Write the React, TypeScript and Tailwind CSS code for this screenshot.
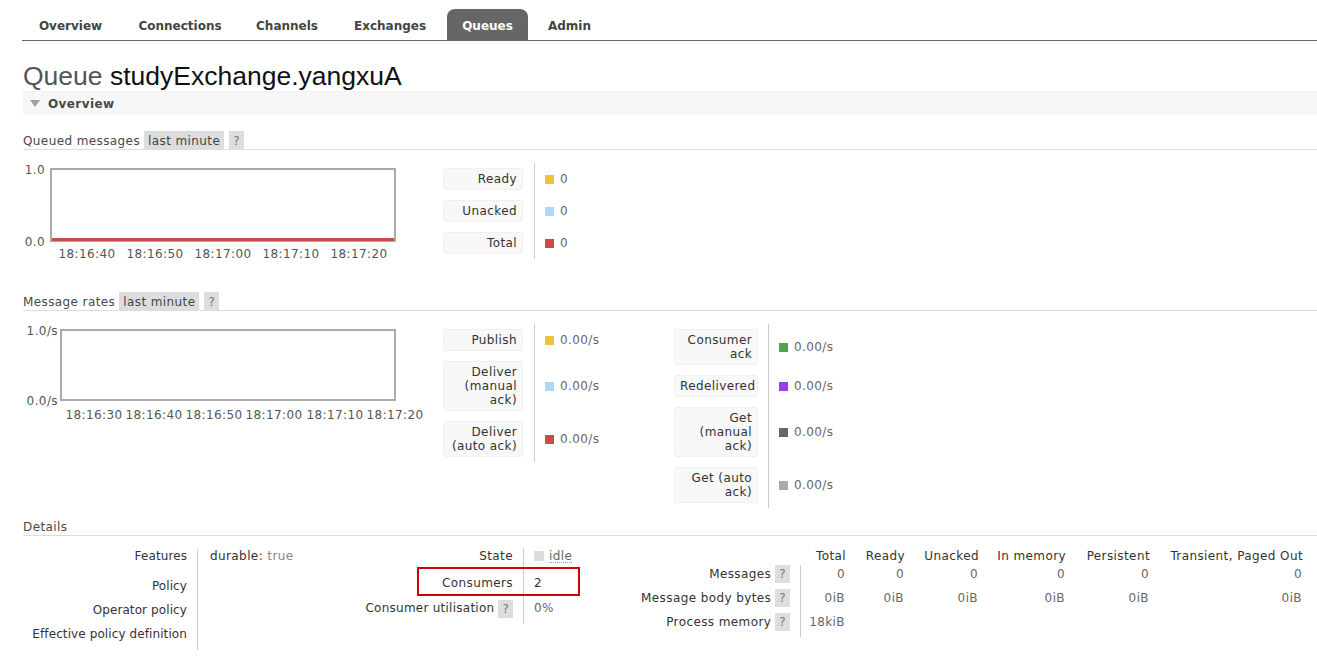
import React from "react";

type LegendItem = { label: string[]; color: string; value: string };

function SectionHeader({ title, badges }: { title: string; badges?: boolean }) {
  return (
    <div className="flex h-[19px] items-stretch border-b border-[#ddd]">
      <span className="flex items-center pr-[4px] pt-[1px] text-[#484848]">{title}</span>
      {badges && (
        <>
          <span className="flex items-center bg-[#ddd] px-[4px] pt-[1px] text-[#444]">last minute</span>
          <span className="ml-[5px] flex items-center bg-[#ddd] px-[4px] pt-[1px] text-[#777]">?</span>
        </>
      )}
    </div>
  );
}

function Legend({
  items,
  labelW,
  valueW,
  gap,
}: {
  items: LegendItem[];
  labelW: string;
  valueW: string;
  gap: string;
}) {
  return (
    <div className="flex flex-col">
      {items.map((it, i) => (
        <div key={i} className="flex items-stretch">
          <div className={`${labelW} py-[5px]`}>
            <div className="rounded-[3px] border border-[#f0f0f0] bg-[#f8f8f8] px-[5px] py-[3px] text-right leading-[14px] text-[#333]">
              {it.label.map((l, j) => (
                <div key={j}>{l}</div>
              ))}
            </div>
          </div>
          <div className={`${gap} ${valueW} flex items-center border-l border-[#ccc] pl-[10px]`}>
            <span className="inline-block h-[9px] w-[9px]" style={{ background: it.color }} />
            <span className="ml-[6px] text-[#666]">{it.value}</span>
          </div>
        </div>
      ))}
    </div>
  );
}

function Chart({
  yTop,
  yBottom,
  boxLeft,
  boxW,
  boxH,
  labelRight,
  xLabels,
  redLine,
}: {
  yTop: string;
  yBottom: string;
  boxLeft: number;
  boxW: number;
  boxH: number;
  labelRight: number;
  xLabels: { t: string; c: number }[];
  redLine?: boolean;
}) {
  return (
    <div className="relative h-[112px] w-[420px] text-[#555]">
      <div className="absolute top-[13px] leading-[14px]" style={{ right: 420 - labelRight }}>
        {yTop}
      </div>
      <div className="absolute leading-[14px]" style={{ right: 420 - labelRight, top: 18 + boxH - 7 }}>
        {yBottom}
      </div>
      <div
        className="absolute top-[18px] border-2 border-[#aaa] bg-white"
        style={{ left: boxLeft, width: boxW, height: boxH }}
      >
        {redLine && <div className="absolute bottom-[-1px] left-0 right-0 h-[3px] bg-[#cb4b4b]" />}
      </div>
      {xLabels.map((x, i) => (
        <div
          key={i}
          className="absolute top-[97px] w-[64px] text-center leading-[14px]"
          style={{ left: x.c - 32 }}
        >
          {x.t}
        </div>
      ))}
    </div>
  );
}

const tabs: [string, string][] = [
  ["Overview", "w-[97px]"],
  ["Connections", "w-[112px]"],
  ["Channels", "w-[92px]"],
  ["Exchanges", "w-[104px]"],
  ["Queues", "w-[81px]"],
  ["Admin", "w-[73px]"],
];

export default function App() {
  return (
    <div className="min-h-screen bg-white pl-[23px] font-['DejaVu_Sans',Verdana,sans-serif] text-[12px] tracking-[0.4px] text-[#484848]">
      {/* Nav */}
      <div className="-ml-px flex gap-[5px] border-b border-[#666] pt-[9px] tracking-normal">
        {tabs.map(([t, w]) => (
          <div
            key={t}
            className={
              t === "Queues"
                ? `${w} flex h-[31px] items-center justify-center rounded-t-[8px] bg-[#666] pt-[2px] font-bold text-white`
                : `${w} flex h-[31px] items-center justify-center pt-[2px] font-bold text-[#444]`
            }
          >
            {t}
          </div>
        ))}
      </div>

      {/* Title */}
      <h1 className="mt-[21px] h-[29px] font-['Liberation_Sans',Arial,sans-serif] text-[26.5px] leading-[29px] tracking-normal">
        <span className="text-[#555]">Queue </span>
        <span className="text-[#111]">studyExchange.yangxuA</span>
      </h1>

      {/* Overview bar */}
      <div className="flex h-[24px] items-center border-t border-[#f2f2f2] bg-[#f7f7f7]">
        <svg width="10" height="7" viewBox="0 0 10 7" className="ml-[7px]">
          <polygon points="0,0 10,0 5,7" fill="#a0a0a0" />
        </svg>
        <span className="ml-[8px] font-bold text-[#484848]">Overview</span>
      </div>

      {/* Queued messages */}
      <div className="mt-[16px]">
        <SectionHeader title="Queued messages" badges />
        <div className="flex h-[142px]">
          <Chart
            yTop="1.0"
            yBottom="0.0"
            boxLeft={27}
            boxW={346}
            boxH={74}
            labelRight={22}
            redLine
            xLabels={[
              { t: "18:16:40", c: 64 },
              { t: "18:16:50", c: 132 },
              { t: "18:17:00", c: 200 },
              { t: "18:17:10", c: 268 },
              { t: "18:17:20", c: 336 },
            ]}
          />
          <div className="mt-[13px]">
            <Legend
              labelW="w-[80px]"
              valueW="w-[140px]"
              gap="ml-[11px]"
              items={[
                { label: ["Ready"], color: "#edc240", value: "0" },
                { label: ["Unacked"], color: "#afd8f8", value: "0" },
                { label: ["Total"], color: "#cb4b4b", value: "0" },
              ]}
            />
          </div>
        </div>
      </div>

      {/* Message rates */}
      <div>
        <SectionHeader title="Message rates" badges />
        <div className="flex h-[206px]">
          <Chart
            yTop="1.0/s"
            yBottom="0.0/s"
            boxLeft={37}
            boxW={336}
            boxH={72}
            labelRight={35}
            xLabels={[
              { t: "18:16:30", c: 71 },
              { t: "18:16:40", c: 131 },
              { t: "18:16:50", c: 191 },
              { t: "18:17:00", c: 251 },
              { t: "18:17:10", c: 312 },
              { t: "18:17:20", c: 372 },
            ]}
          />
          <div className="mt-[12px] flex items-start pt-[1px]">
            <Legend
              labelW="w-[80px]"
              valueW="w-[140px]"
              gap="ml-[11px]"
              items={[
                { label: ["Publish"], color: "#edc240", value: "0.00/s" },
                { label: ["Deliver", "(manual", "ack)"], color: "#afd8f8", value: "0.00/s" },
                { label: ["Deliver", "(auto ack)"], color: "#cb4b4b", value: "0.00/s" },
              ]}
            />
            <Legend
              labelW="w-[84px]"
              valueW="w-[120px]"
              gap="ml-[10px]"
              items={[
                { label: ["Consumer", "ack"], color: "#4da74d", value: "0.00/s" },
                { label: ["Redelivered"], color: "#9440ed", value: "0.00/s" },
                { label: ["Get", "(manual", "ack)"], color: "#666666", value: "0.00/s" },
                { label: ["Get (auto", "ack)"], color: "#aaaaaa", value: "0.00/s" },
              ]}
            />
          </div>
        </div>
      </div>

      {/* Details */}
      <div>
        <SectionHeader title="Details" />
        <div className="mt-[12px] flex items-start leading-[14px] text-[#333]">
          {/* Table 1 */}
          <div className="flex flex-col pt-px">
            {[
              { l: "Features", h: "h-[30px]", v: true },
              { l: "Policy", h: "h-[24px]" },
              { l: "Operator policy", h: "h-[24px]" },
              { l: "Effective policy definition", h: "h-[23px]" },
            ].map((r, i) => (
              <div key={i} className={`flex ${r.h}`}>
                <div className="w-[174px] pr-[10px] text-right tracking-[0.1px]">{r.l}</div>
                <div className="w-[143px] border-l border-[#ccc] pl-[12px]">
                  {r.v && (
                    <>
                      durable: <span className="text-[#888]">true</span>
                    </>
                  )}
                </div>
              </div>
            ))}
          </div>

          {/* Table 2 */}
          <div className="flex flex-col">
            <div className="flex h-[28px]">
              <div className="w-[183px] pr-[10px] pt-px text-right">State</div>
              <div className="flex w-[77px] items-start border-l border-[#ccc] pl-[10px] pt-px">
                <span className="mt-[2px] inline-block h-[10px] w-[10px] bg-[#ddd]" />
                <span className="ml-[5px] text-[#666] underline decoration-dotted decoration-[#999] underline-offset-2">
                  idle
                </span>
              </div>
            </div>
            <div className="relative flex h-[24px]">
              <div className="w-[183px] pr-[10px] text-right">Consumers</div>
              <div className="w-[77px] border-l border-[#ccc] pl-[10px]">2</div>
              <div className="pointer-events-none absolute left-[77px] top-[-9px] h-[29px] w-[163px] border-2 border-[#d40000]" />
            </div>
            <div className="flex h-[24px]">
              <div className="flex w-[183px] items-start justify-end pr-[10px] tracking-[0.25px]">
                <span className="pt-[1px]">Consumer utilisation</span>
                <span className="ml-[4px] flex h-[18px] items-center bg-[#ddd] px-[4px] text-[#777]">?</span>
              </div>
              <div className="w-[77px] border-l border-[#ccc] pl-[10px] pt-[1px] text-[#666]">0%</div>
            </div>
          </div>

          {/* Table 3 */}
          <div className="flex flex-col">
            <div className="flex h-[17px] pt-px">
              <div className="w-[200px]" />
              <div className="flex border-l border-transparent">
                {[
                  ["Total", "w-[45px]"],
                  ["Ready", "w-[59px]"],
                  ["Unacked", "w-[74px]"],
                  ["In memory", "w-[87px]"],
                  ["Persistent", "w-[84px]"],
                  ["Transient, Paged Out", "w-[153px]"],
                ].map(([t, w]) => (
                  <div key={t} className={`${w} text-right`}>
                    {t}
                  </div>
                ))}
              </div>
            </div>
            {[
              { l: "Messages", v: ["0", "0", "0", "0", "0", "0"] },
              { l: "Message body bytes", v: ["0iB", "0iB", "0iB", "0iB", "0iB", "0iB"] },
              { l: "Process memory", v: ["18kiB", "", "", "", "", ""] },
            ].map((r, i) => (
              <div key={i} className="flex h-[24px]">
                <div className="flex w-[200px] items-start justify-end pr-[10px]">
                  <span className="flex h-[18px] items-center">{r.l}</span>
                  <span className="ml-[4px] flex h-[18px] items-center bg-[#ddd] px-[4px] text-[#777]">?</span>
                </div>
                <div className="flex border-l border-[#ccc] text-[#666]">
                  {r.v.map((v, j) => (
                    <div
                      key={j}
                      className={`flex h-[18px] items-center justify-end ${
                        ["w-[44px]", "w-[59px]", "w-[74px]", "w-[87px]", "w-[84px]", "w-[153px]"][j]
                      }`}
                    >
                      {v}
                    </div>
                  ))}
                </div>
              </div>
            ))}
          </div>
        </div>
      </div>
    </div>
  );
}
